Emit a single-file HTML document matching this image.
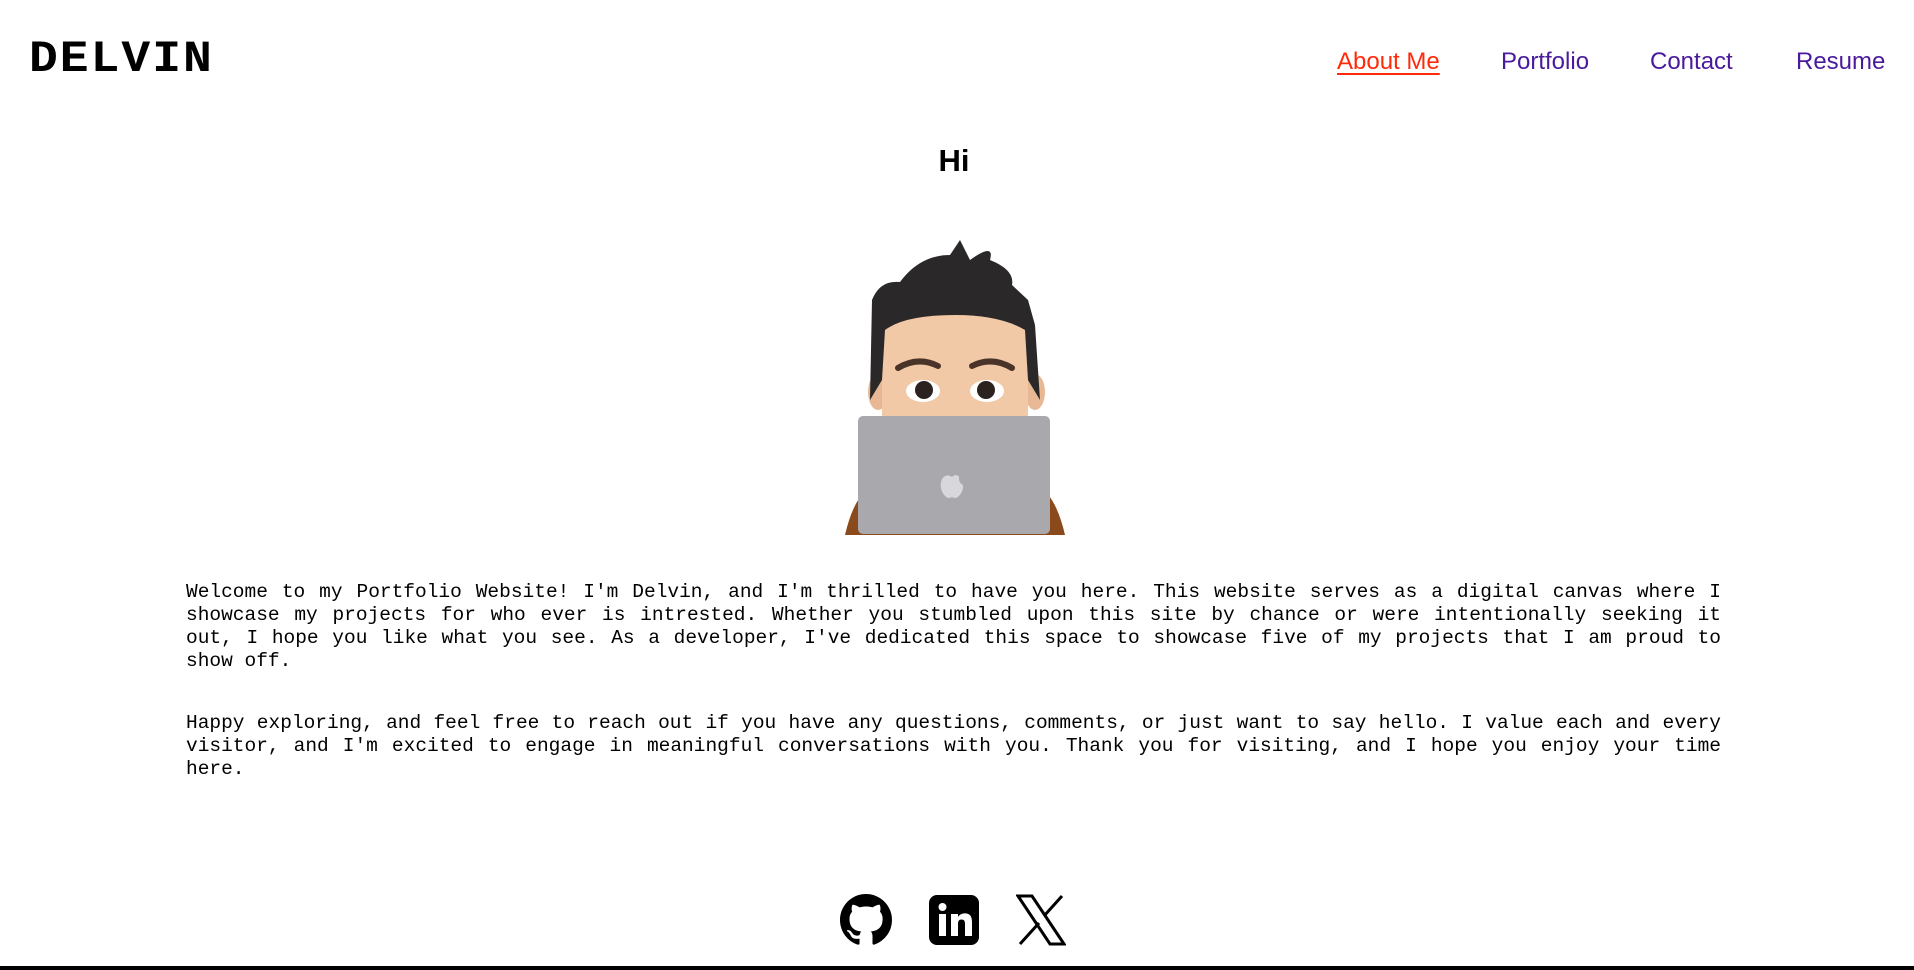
<!DOCTYPE html>
<html><head><meta charset="utf-8"><style>
html,body{margin:0;padding:0;background:#fff;}
body{width:1914px;height:970px;position:relative;overflow:hidden;font-family:"Liberation Sans",sans-serif;}
.logo{position:absolute;left:29px;top:35px;font-family:"Liberation Mono",monospace;font-weight:bold;font-size:48px;letter-spacing:2px;color:#000;transform:scaleY(0.92);transform-origin:top left;}
.nav a{position:absolute;top:48px;font-size:24px;color:#4a1a9c;text-decoration:none;}
.nav a.on{color:#ff2a0a;text-decoration:underline;text-underline-offset:4px;text-decoration-thickness:2px;}
h1{position:absolute;left:0;width:1908px;top:143px;margin:0;text-align:center;font-size:31px;font-weight:bold;}
.p{position:absolute;left:186px;width:1535px;font-family:"Liberation Mono",monospace;font-size:19.5px;line-height:23px;color:#000;margin:0;}
.p div{text-align:justify;text-align-last:justify;white-space:nowrap;}
.p div.l{text-align-last:left;}
.bar{position:absolute;left:0;top:966px;width:1914px;height:4px;background:#000;}
</style></head><body>
<div class="logo">DELVIN</div>
<div class="nav">
<a class="on" style="left:1337px">About Me</a>
<a style="left:1501px">Portfolio</a>
<a style="left:1650px">Contact</a>
<a style="left:1796px">Resume</a>
</div>
<h1>Hi</h1>
<svg style="position:absolute;left:830px;top:230px" width="250" height="310" viewBox="0 0 250 310">
<path d="M15 305 Q25 262 45 255 L205 255 Q225 262 235 305Z" fill="#8a4a1c"/>
<ellipse cx="48" cy="162" rx="10" ry="18" fill="#e8b894"/>
<ellipse cx="205" cy="162" rx="10" ry="18" fill="#e8b894"/>
<path d="M52 110 Q52 80 125 80 Q198 80 198 110 L198 190 L52 190Z" fill="#f2c9a6"/>
<path d="M40 170 L42 70 Q50 50 70 52 Q90 25 120 25 L130 10 L140 30 Q165 12 160 30 Q185 40 182 55 L198 70 L205 95 L210 170 L198 150 L195 100 Q170 85 125 85 Q75 85 55 100 L52 150Z" fill="#2a2828"/>
<path d="M68 138 Q88 126 108 136" stroke="#4a3328" stroke-width="6" fill="none" stroke-linecap="round"/>
<path d="M142 136 Q162 126 182 138" stroke="#4a3328" stroke-width="6" fill="none" stroke-linecap="round"/>
<ellipse cx="93" cy="161" rx="17" ry="11" fill="#fff"/>
<ellipse cx="157" cy="161" rx="17" ry="11" fill="#fff"/>
<circle cx="94" cy="160" r="9" fill="#2b2220"/>
<circle cx="156" cy="160" r="9" fill="#2b2220"/>
<rect x="28" y="186" width="192" height="118" rx="5" fill="#a8a8ad"/>
<path d="M122 247 q-6-4-10 2 q-4 10 4 18 q3 2 6 0 q3 2 6 0 q6-6 5-12 q-4-2-4-6 q1-3 -3-4 q-2 0-4 2z" fill="#d8d8dc"/>
</svg>
<div class="p" style="top:581px">
<div>Welcome to my Portfolio Website! I'm Delvin, and I'm thrilled to have you here. This website serves as a digital canvas where I</div>
<div>showcase my projects for who ever is intrested. Whether you stumbled upon this site by chance or were intentionally seeking it</div>
<div>out, I hope you like what you see. As a developer, I've dedicated this space to showcase five of my projects that I am proud to</div>
<div class="l">show off.</div>
</div>
<div class="p" style="top:712px">
<div>Happy exploring, and feel free to reach out if you have any questions, comments, or just want to say hello. I value each and every</div>
<div>visitor, and I'm excited to engage in meaningful conversations with you. Thank you for visiting, and I hope you enjoy your time</div>
<div class="l">here.</div>
</div>
<svg style="position:absolute;left:840px;top:894px" width="52" height="52" viewBox="0 0 16 16"><path fill="#000" d="M8 0C3.58 0 0 3.58 0 8c0 3.54 2.29 6.53 5.47 7.59.4.07.55-.17.55-.38 0-.19-.01-.82-.01-1.49-2.01.37-2.53-.49-2.69-.94-.09-.23-.48-.94-.82-1.13-.28-.15-.68-.52-.01-.53.63-.01 1.08.58 1.23.82.72 1.21 1.87.87 2.33.66.07-.52.28-.87.51-1.07-1.78-.2-3.64-.89-3.64-3.95 0-.87.31-1.59.82-2.15-.08-.2-.36-1.02.08-2.12 0 0 .67-.21 2.2.82.64-.18 1.32-.27 2-.27.68 0 1.36.09 2 .27 1.53-1.04 2.2-.82 2.2-.82.44 1.1.16 1.92.08 2.12.51.56.82 1.27.82 2.15 0 3.07-1.87 3.75-3.65 3.95.29.25.54.73.54 1.48 0 1.07-.01 1.93-.01 2.2 0 .21.15.46.55.38A8.013 8.013 0 0016 8c0-4.42-3.58-8-8-8z"/></svg>
<svg style="position:absolute;left:929px;top:895px" width="50" height="50" viewBox="0 0 50 50"><rect width="50" height="50" rx="8" fill="#000"/><rect x="10" y="19" width="7" height="22" fill="#fff"/><circle cx="13.5" cy="12" r="4" fill="#fff"/><path d="M22 19h7v3c1.5-2.5 4-3.6 7-3.6 5 0 7 3 7 9V41h-7V29c0-3-1-4.5-3.5-4.5S29 26 29 29v12h-7z" fill="#fff"/></svg>
<svg style="position:absolute;left:1016px;top:894px" width="50" height="52" viewBox="0 0 50 52"><path d="M2 2h14l32 48H34z" fill="none" stroke="#000" stroke-width="3"/><path d="M46 2L28 22M4 50l19-21" stroke="#000" stroke-width="3"/></svg>
<div class="bar"></div>
</body></html>
